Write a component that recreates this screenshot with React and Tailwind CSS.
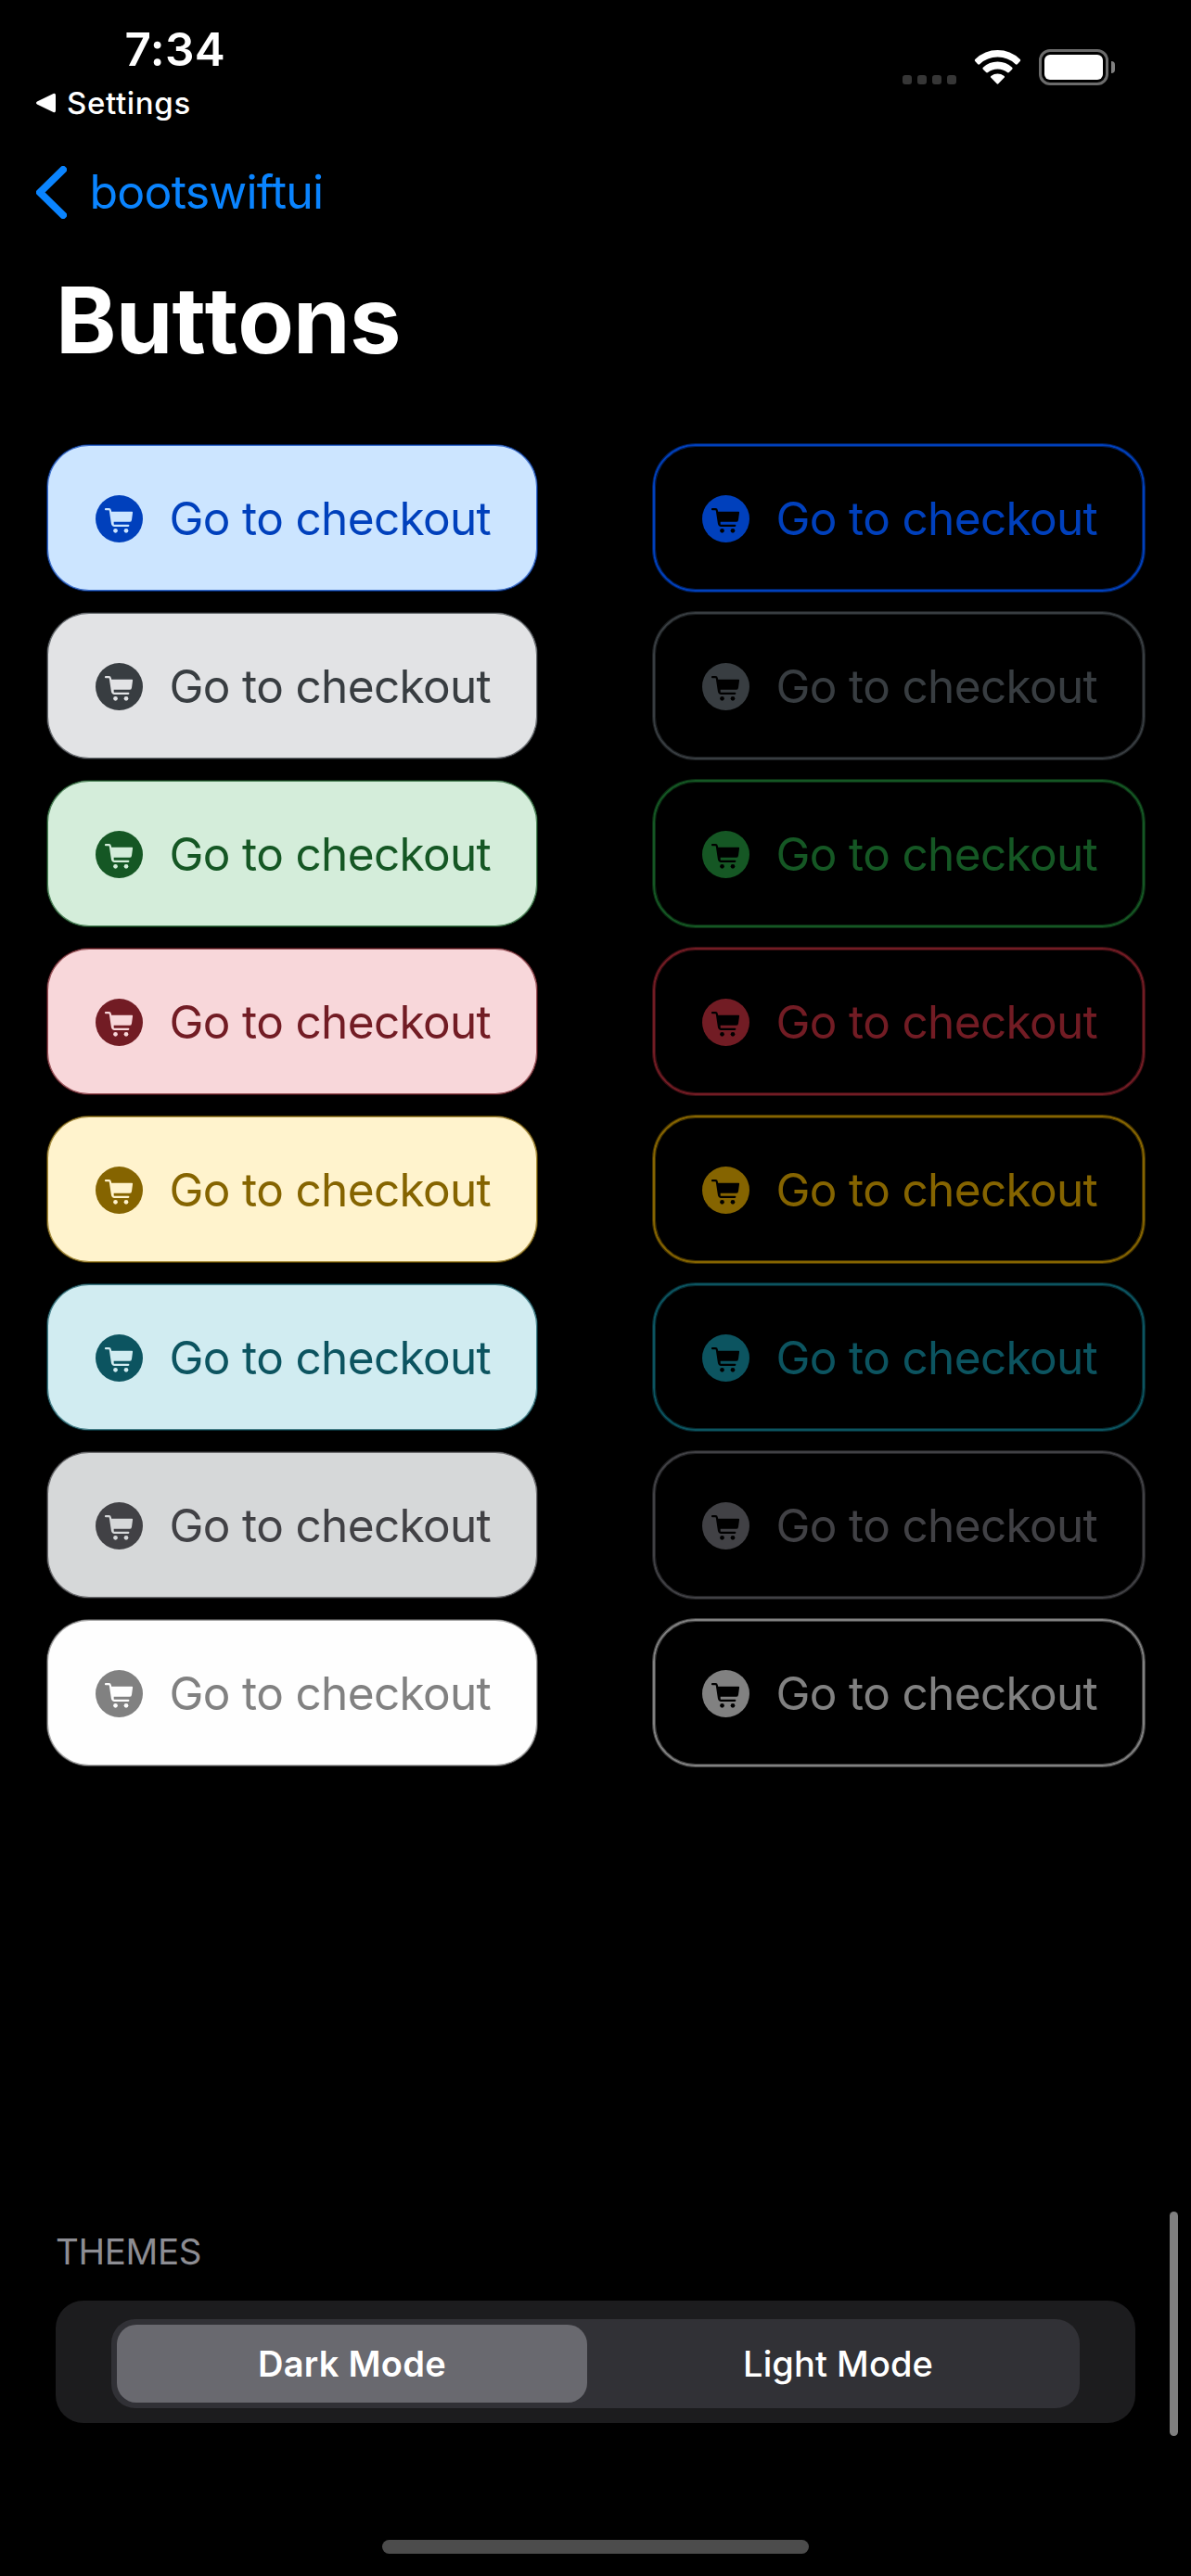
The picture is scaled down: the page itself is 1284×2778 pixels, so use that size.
const variants = [
  { name: "primary", fill: "bg-[#cce5ff]", ink: "text-[#0040bc]" },
  { name: "secondary", fill: "bg-[#e2e3e5]", ink: "text-[#383d41]" },
  { name: "success", fill: "bg-[#d4edda]", ink: "text-[#155724]" },
  { name: "danger", fill: "bg-[#f8d7da]", ink: "text-[#721c24]" },
  { name: "warning", fill: "bg-[#fff3cd]", ink: "text-[#856400]" },
  { name: "info", fill: "bg-[#d1ecf1]", ink: "text-[#0c5460]" },
  { name: "dark", fill: "bg-[#d6d8d9]", ink: "text-[#414145]" },
  { name: "light", fill: "bg-[#fefefe]", ink: "text-[#818181]" },
];

function CartIcon({ id }) {
  return (
    <svg viewBox="0 0 153 153" className="mt-[2px] size-[51px] shrink-0" aria-hidden="true">
      <mask id={id}>
        <rect width="153" height="153" fill="white" />
        <path
          d="M33 45.500H43Q47 45.500 47.600 50L54 92Q55 98.500 61 98.500H106"
          fill="none"
          stroke="black"
          strokeWidth="6.500"
          strokeLinecap="round"
        />
        <path d="M48 53H118Q120.500 53 120.200 56L117 80Q116 86.500 110 86.500H59V95H54Z" fill="black" />
        <circle cx="64.500" cy="115" r="7" fill="black" />
        <circle cx="99" cy="115" r="7" fill="black" />
      </mask>
      <circle cx="76.500" cy="76.500" r="76.500" fill="currentColor" mask={`url(#${id})`} />
    </svg>
  );
}

function ButtonContent({ id }) {
  return (
    <>
      <CartIcon id={id} />
      <span className="text-[49.5px] leading-[60px] tracking-[-0.65px] whitespace-nowrap">Go to checkout</span>
    </>
  );
}

function FilledButton({ name, fill, ink }) {
  return (
    <button
      className={`mt-px flex h-[157px] w-[528px] items-center gap-[28.5px] rounded-[45px] pl-[52px] shadow-[0_0_0_1px_color-mix(in_srgb,currentColor_55%,transparent),inset_0_0_0_1px_color-mix(in_srgb,currentColor_70%,transparent)] ${fill} ${ink}`}
    >
      <ButtonContent id={`cart-filled-${name}`} />
    </button>
  );
}

function OutlineButton({ name, ink }) {
  return (
    <button
      className={`flex h-[159px] w-[530px] items-center gap-[28.5px] rounded-[46px] border-2 border-current pl-[51px] shadow-[0_0_0_1px_color-mix(in_srgb,currentColor_50%,transparent),inset_0_0_0_1px_color-mix(in_srgb,currentColor_50%,transparent)] ${ink}`}
    >
      <ButtonContent id={`cart-outline-${name}`} />
    </button>
  );
}

function StatusBar() {
  return (
    <div className="flex h-[136px] justify-between pt-[23px] pr-[82px] pl-[39px]">
      <div className="flex flex-col">
        <span className="ml-[95.5px] text-[49.5px] leading-[60px] font-semibold tracking-[0.4px]">7:34</span>
        <div className="mt-2 flex h-10 items-center gap-[12px]">
          <svg viewBox="0 0 21 22" className="h-[22px] w-[21px]" aria-hidden="true">
            <path d="M1 9.500 18.500 1Q21 0 21 3V19Q21 22 18.500 21L1 12.500Q-1 11 1 9.500Z" fill="white" />
          </svg>
          <span className="text-[33px] leading-10 font-medium tracking-[0.65px]">Settings</span>
        </div>
      </div>
      <div className="mt-[29px] flex h-[42px] items-start">
        <div className="mt-[29px] flex gap-1.5">
          <span className="size-2.5 rounded-[3px] bg-[#363636]" />
          <span className="size-2.5 rounded-[3px] bg-[#363636]" />
          <span className="size-2.5 rounded-[3px] bg-[#363636]" />
          <span className="size-2.5 rounded-[3px] bg-[#363636]" />
        </div>
        <svg viewBox="0 0 153 112" className="mt-[2px] ml-[19px] h-[37px] w-[51px]" aria-hidden="true">
          <g fill="white">
            <path d="M3 30Q35 0 76.500 0T150 30Q153 33 150 36L141 46Q138 49 135 46Q110 23 76.500 23T18 46Q15 49 12 46L3 36Q0 33 3 30Z" />
            <path d="M29 57Q49 38 76.500 38T124 57Q127 60 124 63L114 73Q111 76 108 73Q95 62 76.500 62T45 73Q42 76 39 73L29 63Q26 60 29 57Z" />
            <path d="M56 84Q65 77 76.500 77T97 84Q101 87 98 90L79 110Q76.500 112.500 74 110L55 90Q52 87 56 84Z" />
          </g>
        </svg>
        <div className="mt-px ml-[19px] flex items-center">
          <div className="h-[39px] w-[75px] rounded-[12px] border-3 border-[#6b6b6b] p-[3px]">
            <div className="h-full rounded-[6px] bg-white" />
          </div>
          <div className="ml-[3px] h-[13px] w-1 rounded-r-full bg-[#808080]" />
        </div>
      </div>
    </div>
  );
}

export default function App() {
  return (
    <main className="relative flex h-[2778px] w-[1284px] flex-col overflow-hidden bg-black font-['Inter',sans-serif] text-white">
      <StatusBar />

      <nav className="mt-[40px] flex h-[62px] items-center gap-[24.5px] pl-[39px] text-[#0a84ff]">
        <svg viewBox="0 0 33 57" className="h-[57px] w-[33px]" aria-hidden="true">
          <path
            d="M29 4 4 28.500 29 53"
            fill="none"
            stroke="currentColor"
            strokeWidth="8"
            strokeLinecap="round"
            strokeLinejoin="round"
          />
        </svg>
        <span className="text-[50px] leading-[62px] tracking-[-0.8px]">bootswiftui</span>
      </nav>

      <h1 className="mt-[47px] pl-[60px] text-[99px] leading-[120px] font-bold tracking-[-0.85px] [font-kerning:none]">
        Buttons
      </h1>

      <section className="mt-[74px] flex h-[1426px] justify-between pr-[50px] pl-[51px]">
        <div className="flex flex-col gap-[23px]">
          {variants.map((v) => (
            <FilledButton key={v.name} {...v} />
          ))}
        </div>
        <div className="flex flex-col gap-[22px]">
          {variants.map((v) => (
            <OutlineButton key={v.name} {...v} />
          ))}
        </div>
      </section>

      <section className="mt-[498px] px-[60px]">
        <h2 className="text-[38.5px] leading-[50px] tracking-[-0.35px] text-[#8d8d93]">THEMES</h2>
        <div className="mt-[28px] h-[132px] rounded-[30px] bg-[#1c1c1e] px-[60px] pt-5">
          <div className="flex h-24 rounded-[26px] bg-[#313136] p-1.5">
            <button className="w-[507px] rounded-[21px] bg-[#69696f] text-[38px] font-semibold tracking-[0.26px]">
              Dark Mode
            </button>
            <button className="flex-1 pl-[16px] text-[38px] font-medium tracking-[0.08px]">Light Mode</button>
          </div>
        </div>
      </section>

      <div className="mx-auto mt-auto mb-6 h-[15px] w-[460px] rounded-full bg-[#4c4c4c]" />
      <div className="absolute top-[2385px] right-[14px] h-[242px] w-[9px] rounded-full bg-[#7f7f7f]" />
    </main>
  );
}
